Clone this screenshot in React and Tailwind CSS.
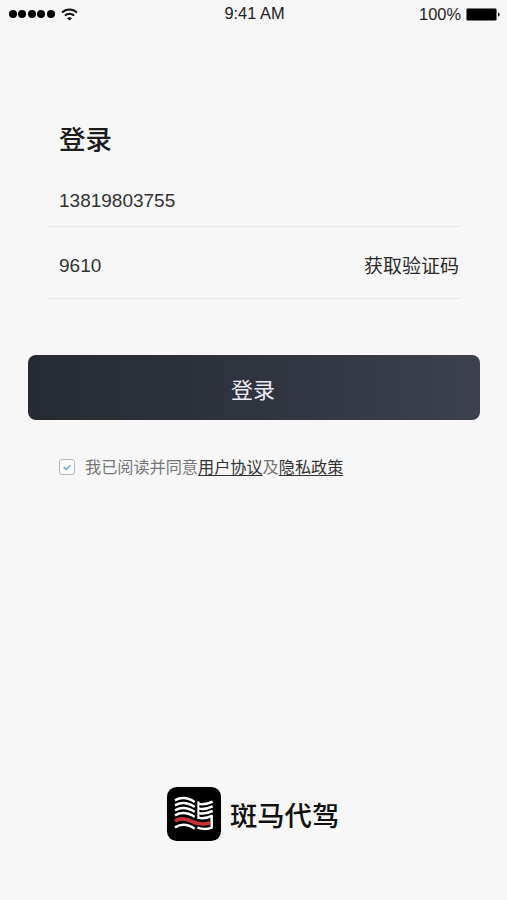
import React, { useState } from 'react';

const StatusBar = () => (
  <div className="grid grid-cols-3 items-center h-7 pl-[9px] pr-[7px] text-[16.4px] text-[#222]">
    <div className="flex items-center">
      <div className="flex gap-[1.4px]">
        {[0, 1, 2, 3, 4].map((dot) => (
          <span key={dot} className="size-2 rounded-full bg-black" />
        ))}
      </div>
      <svg className="ml-[6px] w-[17px] h-[13px]" viewBox="0 0 17 13" fill="none" stroke="#111" strokeWidth="2">
        <path d="M1 4.6C5.2 0.4 11.8 0.4 16 4.6" />
        <path d="M3.9 7.6C6.5 5.1 10.5 5.1 13.1 7.6" />
        <path d="M6 10.2C7.4 8.8 9.6 8.8 11 10.2L8.5 12.6Z" fill="#111" stroke="none" />
      </svg>
    </div>
    <span className="text-center leading-[26px] pb-[2px]">9:41 AM</span>
    <div className="flex items-center justify-end">
      <span>100%</span>
      <svg className="ml-[5px] mt-px w-[34px] h-[13px]" viewBox="0 0 34 13">
        <rect x="0.5" y="0.5" width="30" height="12" rx="1.5" fill="#000" stroke="#777" />
        <path d="M32 4.5C34.2 5 34.2 8 32 8.5Z" fill="#111" />
      </svg>
    </div>
  </div>
);

const BrandLogo = () => (
  <svg className="size-[54px]" viewBox="36 36 162 162" fill="none" strokeWidth="7.5">
    <rect x="36" y="36" width="162" height="162" rx="29" fill="#000" />
    <g stroke="#fff">
      <path d="M60 76C78 66 98 67 119 81" />
      <path d="M60 91C78 81 98 82 119 96" />
      <path d="M60 106C78 96 98 97 119 111" />
      <path d="M60 121C78 111 98 112 119 126" />
      <path d="M60 157C78 146 98 147 119 161" />
      <path d="M130 79V132" strokeWidth="6" />
      <path d="M130 86C144 90 158 87 173 80" />
      <path d="M130 100C144 104 158 101 173 94" />
      <path d="M130 114C144 118 158 115 173 108" />
      <path d="M130 128C144 132 158 129 173 122" />
      <path d="M170 120V158C156 164 143 163 127 158" />
    </g>
    <path d="M60 138C78 127 94 131 110 139C128 148 148 149 165 143" stroke="#c93235" strokeWidth="11" />
  </svg>
);

const App = () => {
  const [phone, setPhone] = useState('13819803755');
  const [code, setCode] = useState('9610');
  const [agreed, setAgreed] = useState(true);

  return (
    <div className="flex flex-col h-[900px] w-[507px] bg-[#f7f7f7] font-['Liberation_Sans','Noto_Sans_CJK_SC',sans-serif]">
      <StatusBar />

      <main className="flex flex-col flex-1">
        <h1 className="mt-[93px] ml-[59px] text-[26.5px] leading-[38px] font-medium text-[#1c1c1c]">登录</h1>

        <div className="ml-[49px] mr-[46px] text-[19px] text-[#333]">
          <div className="flex items-center h-[68px] pt-[18px] px-[10px] border-b border-[#e8e8e8]">
            <input
              value={phone}
              onChange={(e) => setPhone(e.target.value)}
              className="w-full bg-transparent outline-none"
            />
          </div>
          <div className="flex items-center justify-between h-[72px] pt-[7px] pl-[10px] pr-[2px] border-b border-[#e8e8e8]">
            <input
              value={code}
              onChange={(e) => setCode(e.target.value)}
              className="w-40 bg-transparent outline-none"
            />
            <button className="pt-[2px] text-[#2b2b2b]">获取验证码</button>
          </div>
        </div>

        <button className="mt-[56px] ml-[28px] mr-[27px] h-[65px] pt-[6px] pr-[2px] rounded-lg bg-linear-to-r from-[#262a32] via-[#30343f] to-[#3c414d] text-[22px] text-[#ececf2]">
          登录
        </button>

        <div className="flex items-center mt-[35px] ml-[59px] h-6 text-[16.15px] text-[#777]">
          <button
            onClick={() => setAgreed(!agreed)}
            className="flex items-center justify-center size-4 mr-[10px] border border-[#b5b9bd] rounded-[3px] bg-[#fafafa]"
          >
            {agreed && (
              <svg className="w-2 h-[7px]" viewBox="0 0 8 7" fill="none" stroke="#62a9d0" strokeWidth="1.4">
                <path d="M0.7 3L3.2 5.4L7.4 1.2" />
              </svg>
            )}
          </button>
          <p className="whitespace-nowrap">
            我已阅读并同意
            <a className="text-[#333] underline underline-offset-2">用户协议</a>
            及
            <a className="text-[#333] underline underline-offset-2">隐私政策</a>
          </p>
        </div>
      </main>

      <footer className="flex items-center mb-[59px] ml-[167px]">
        <BrandLogo />
        <span className="ml-[9px] pt-[6px] text-[27.3px] leading-[40px] font-medium text-[#111]">斑马代驾</span>
      </footer>
    </div>
  );
};

export default App;
